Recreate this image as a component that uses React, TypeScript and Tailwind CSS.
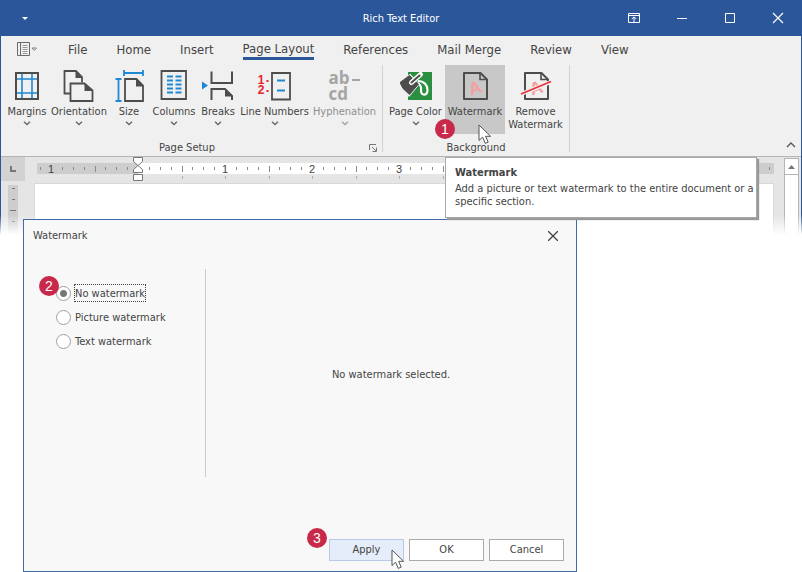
import { useState } from 'react'
import type { ReactNode } from 'react'

const tabs = ['File', 'Home', 'Insert', 'Page Layout', 'References', 'Mail Merge', 'Review', 'View']
const watermarkOptions = ['No watermark', 'Picture watermark', 'Text watermark']

// Ruler scale: one inch in pixels and the position of the left margin.
const INCH = 87
const ZERO = 101

const Badge = ({ value, className }: { value: number; className: string }) => (
  <span
    className={`absolute z-10 flex h-5 w-5 items-center justify-center rounded-full bg-[#c82849] font-['Liberation_Sans'] text-[14px] leading-5 text-white ${className}`}
  >
    {value}
  </span>
)

const Cursor = ({ className }: { className: string }) => (
  <svg className={`pointer-events-none absolute z-10 ${className}`} width="14" height="21" viewBox="0 0 14 21">
    <path d="M1 1v15.5l3.6-3.3 2.7 6.2 2.9-1.3-2.6-5.8h5z" fill="#fff" stroke="#555" strokeWidth="1" />
  </svg>
)

const Chevron = () => (
  <svg width="8" height="5" viewBox="0 0 8 5">
    <path d="M1 .8l3 2.8 3-2.8" fill="none" stroke="currentColor" strokeWidth="1.3" />
  </svg>
)

const MarginsIcon = () => (
  <svg width="32" height="32" viewBox="0 0 32 32" fill="none">
    <path d="M11 3v26M21 3v26M5 9h22M5 23h22" stroke="#1e88d2" strokeWidth="1.6" />
    <path d="M5 3h22v26H5z" stroke="#4d4d4b" strokeWidth="2" />
  </svg>
)

const OrientationIcon = () => (
  <svg width="32" height="32" viewBox="0 0 32 32" fill="none" stroke="#4d4d4b" strokeWidth="1.8">
    <path d="M7 23.5H1.5V1H13l6 6v5.5" />
    <path d="M12.5 1v7H19z" fill="#4d4d4b" stroke="none" />
    <path d="M7.5 13.5h14l8 7V31h-22z" />
    <path d="M21.5 13.5V21h8z" fill="#4d4d4b" stroke="none" />
  </svg>
)

const SizeIcon = () => (
  <svg width="32" height="32" viewBox="0 0 32 32" fill="none" strokeWidth="1.8">
    <path d="M11 3h19M11 0v6M30 0v6M5.5 9v22M2.5 9h6M2.5 31h6" stroke="#1e88d2" />
    <path d="M12 9h11.5l6.5 6.5V31H12z" stroke="#4d4d4b" />
    <path d="M23 9v7.5h7.5z" fill="#4d4d4b" />
  </svg>
)

const ColumnsIcon = () => (
  <svg width="32" height="32" viewBox="0 0 32 32" fill="none" strokeWidth="1.8">
    <path d="M3.5 1H28v28H3.5z" stroke="#4d4d4b" />
    <path
      d="M9 6.5h6M9 10.5h6M9 14.5h6M9 18.5h6M9 22.5h6M17.5 6.5h6M17.5 10.5h6M17.5 14.5h6M17.5 18.5h6M17.5 22.5h6"
      stroke="#1e88d2"
    />
  </svg>
)

const BreaksIcon = () => (
  <svg width="32" height="32" viewBox="0 0 32 32" fill="none" stroke="#4d4d4b" strokeWidth="2">
    <path d="M0 11.5l6 4-6 4z" fill="#1e88d2" stroke="none" />
    <path d="M9.5 1.5V13H30V1.5" />
    <path d="M9.5 30V19H23l7 7v4" />
    <path d="M23 19v7.5h7.5z" fill="#4d4d4b" stroke="none" />
  </svg>
)

const LineNumbersIcon = () => (
  <span className="flex h-8 w-[34px]">
    <span className="w-[7px] pt-[5px] font-['Liberation_Sans'] text-[12px] font-bold leading-[10px] text-[#e9222b]">
      <span className="block">1</span>
      <span className="block">2</span>
    </span>
    <svg width="27" height="32" viewBox="0 0 27 32" fill="none" strokeWidth="1.8">
      <path d="M1.5 11h2M1.5 21h2" stroke="#e9222b" />
      <path d="M7 3h18v26.5H7z" stroke="#4d4d4b" />
      <path d="M12 10.5h8M12 20.5h8" stroke="#1e88d2" />
    </svg>
  </span>
)

const HyphenationIcon = () => (
  <span className="block h-8 w-8 text-left font-['Open_Sans'] text-[17px] font-bold leading-4 text-[#a5a5a4]">
    <span className="flex items-center gap-[2px]">
      ab
      <span className="mt-1 h-[2px] w-2 shrink-0 bg-current" />
    </span>
    <span className="block">cd</span>
  </span>
)

const PageColorIcon = () => (
  <svg width="32" height="32" viewBox="0 0 32 32" fill="none">
    <path d="M8 2h24v28H8z" fill="#2b8f41" />
    <path d="M-.5 12.5L10 5l8.5 9L9 25.5 2 19z" fill="#efefef" stroke="#efefef" strokeWidth="2" />
    <path d="M18 11c6 0 9.5 4 9.5 9 0 6-6.5 6-6.5 1 0-3 1-6-3.5-8" stroke="#fff" strokeWidth="2.2" />
    <path
      d="M0 12.5L9.5 5.5 18.5 14l-9 10.5L3 18.5z"
      fill="#4d4d4b"
      stroke="#4d4d4b"
      strokeWidth="1"
      strokeLinejoin="round"
    />
    <path d="M11.5 12.5L20.5 4.5" stroke="#fff" strokeWidth="5" strokeLinecap="round" />
    <path d="M11.5 12.5L19.5 5.5" stroke="#4d4d4b" strokeWidth="2" strokeLinecap="round" />
  </svg>
)

const WatermarkPage = () => (
  <>
    <path d="M5 3h16.5L28 9.5V29H5z" stroke="#4d4d4b" strokeWidth="2" strokeLinejoin="round" />
    <path d="M21 3v6.5h7" stroke="#4d4d4b" strokeWidth="1.6" />
    <text
      x="16"
      y="24"
      textAnchor="middle"
      transform="rotate(-18 16 18)"
      fill="#f2a0a0"
      fontFamily="Liberation Sans"
      fontWeight="bold"
      fontSize="18"
    >
      A
    </text>
  </>
)

const WatermarkIcon = () => (
  <svg width="32" height="32" viewBox="0 0 32 32" fill="none">
    <WatermarkPage />
  </svg>
)

const RemoveWatermarkIcon = () => (
  <svg width="32" height="32" viewBox="0 0 32 32" fill="none">
    <WatermarkPage />
    <path d="M0 24.5L32 11.5" stroke="#efefef" strokeWidth="4" />
    <path d="M1 24L31 11.5" stroke="#ee3338" strokeWidth="1.8" />
  </svg>
)

interface RibbonButtonProps {
  icon: ReactNode
  label: string
  width: string
  menu?: boolean
  active?: boolean
  disabled?: boolean
}

const RibbonButton = ({ icon, label, width, menu = true, active, disabled }: RibbonButtonProps) => (
  <button
    type="button"
    disabled={disabled}
    className={`flex h-[69px] shrink-0 flex-col items-center pt-[5px] leading-[13px] ${width} ${
      active ? 'bg-[#c8c8c8]' : ''
    } ${disabled ? 'text-[#8f8f8f]' : ''}`}
  >
    {icon}
    <span className="mt-[3px]">{label}</span>
    {menu && (
      <span className="mt-[3px] flex opacity-80">
        <Chevron />
      </span>
    )}
  </button>
)

const TitleBar = () => (
  <header className="grid h-9 grid-cols-3 items-center bg-[#2b579a] text-white">
    <button type="button" aria-label="Customize quick access" className="ml-[22px] w-2">
      <svg width="6" height="3" viewBox="0 0 6 3">
        <path d="M0 0h6L3 3z" fill="#fff" />
      </svg>
    </button>
    <h1 className="pt-[2px] text-center">Rich Text Editor</h1>
    <div className="mr-[18px] flex justify-end gap-9">
      <button type="button" aria-label="Ribbon display options">
        <svg width="12" height="12" viewBox="0 0 12 12" fill="none" stroke="#fff">
          <path d="M.5 1.5h11v9H.5zM.5 3.5h11M6 10V5M3.8 7L6 4.8 8.200 7" />
        </svg>
      </button>
      <button type="button" aria-label="Minimize">
        <svg width="12" height="12" viewBox="0 0 12 12" stroke="#fff">
          <path d="M1 6.5h10" />
        </svg>
      </button>
      <button type="button" aria-label="Maximize">
        <svg width="12" height="12" viewBox="0 0 12 12" fill="none" stroke="#fff">
          <path d="M1.5 1.5h9v9h-9z" />
        </svg>
      </button>
      <button type="button" aria-label="Close">
        <svg width="12" height="12" viewBox="0 0 12 12" stroke="#fff" strokeWidth="1.2">
          <path d="M1 1l10 10M11 1L1 11" />
        </svg>
      </button>
    </div>
  </header>
)

const TabStrip = () => (
  <nav className="flex h-[29px] items-start pl-4 pt-1 text-[13px] leading-[18px]">
    <button type="button" aria-label="Application menu" className="mr-[31px] mt-[2px]">
      <svg width="20" height="14" viewBox="0 0 20 14" fill="none" stroke="#6a6a6a">
        <path d="M.5.5h12v13H.5zM3.5.5v13" />
        <path d="M5.5 3.5h5M5.5 5.5h5M5.5 7.5h5M5.5 9.5h5M5.5 11.5h5" stroke="#9a9a9a" />
        <path d="M15 6h4.5L17.25 8.5z" strokeWidth=".8" />
      </svg>
    </button>
    <div className="flex gap-[29px]">
      {tabs.map((tab) => (
        <button
          key={tab}
          type="button"
          className={`h-[20px] whitespace-nowrap ${tab === 'Page Layout' ? 'border-b-3 border-[#2b579a]' : ''}`}
        >
          {tab}
        </button>
      ))}
    </div>
  </nav>
)

const Tooltip = () => (
  <div
    role="tooltip"
    className="absolute left-0 top-[92px] z-10 h-[61px] w-[312px] border border-[#a8a8a8] bg-white pl-[9px] pt-2 leading-[13px] shadow-[2px_2px_1px_#999]"
  >
    <p className="mb-[2px] font-bold leading-[14px]">Watermark</p>
    <p>Add a picture or text watermark to the entire document or a specific section.</p>
  </div>
)

const Ribbon = () => (
  <section className="flex h-[92px] border-b border-[#b5b5b5]">
    <div className="flex flex-col">
      <div className="flex pl-1">
        <RibbonButton icon={<MarginsIcon />} label="Margins" width="w-[44px]" />
        <RibbonButton icon={<OrientationIcon />} label="Orientation" width="w-[60px]" />
        <RibbonButton icon={<SizeIcon />} label="Size" width="w-[40px]" />
        <RibbonButton icon={<ColumnsIcon />} label="Columns" width="w-[50px]" />
        <RibbonButton icon={<BreaksIcon />} label="Breaks" width="w-[38px]" />
        <RibbonButton icon={<LineNumbersIcon />} label="Line Numbers" width="w-[75px]" />
        <RibbonButton icon={<HyphenationIcon />} label="Hyphenation" width="w-[65px]" disabled />
      </div>
      <div className="grid grid-cols-[1fr_auto] items-center pl-1 pt-[6px]">
        <span className="text-center">Page Setup</span>
        <button type="button" aria-label="Page setup options">
          <svg width="8" height="8" viewBox="0 0 8 8" fill="none" stroke="#777">
            <path d="M.5 6V.5H7M3 3l4 4M7.5 3.5v4h-4" />
          </svg>
        </button>
      </div>
    </div>
    <div className="mb-1 ml-[5px] flex flex-col border-x border-[#d4d4d4] px-[3px]">
      <div className="flex">
        <RibbonButton icon={<PageColorIcon />} label="Page Color" width="w-[59px]" />
        <div className="relative">
          <RibbonButton icon={<WatermarkIcon />} label="Watermark" width="w-[60px]" menu={false} active />
          <Badge value={1} className="-left-[10px] top-[54px]" />
          <Cursor className="left-[33px] top-[59px]" />
          <Tooltip />
        </div>
        <RibbonButton icon={<RemoveWatermarkIcon />} label="Remove Watermark" width="w-[61px]" menu={false} />
      </div>
      <span className="pt-[6px] text-center">Background</span>
    </div>
    <button type="button" aria-label="Collapse ribbon" className="mb-2 ml-auto mr-[5px] self-end">
      <svg width="10" height="6" viewBox="0 0 10 6" fill="none" stroke="#555" strokeWidth="1.3">
        <path d="M1 5l4-4 4 4" />
      </svg>
    </button>
  </section>
)

const Ruler = () => {
  const ticks = Array.from({ length: 68 }, (_, i) => i - 9)
  return (
    <svg className="w-full" height="26" aria-hidden="true">
      <rect x="0" y="6" width="100%" height="11" fill="#cdcdcd" />
      <rect x={ZERO} y="6" width="566" height="11" fill="#fff" />
      {ticks.map((i) => {
        const x = ZERO + (i * INCH) / 8
        if (i === 0) return null
        if (i % 8 === 0) {
          // numbers past three inches lie under the tooltip
          if (i > 24) return null
          return (
            <text key={i} x={x} y="16" textAnchor="middle" fontSize="11" fontFamily="Liberation Sans" fill="#444">
              {Math.abs(i / 8)}
            </text>
          )
        }
        const tall = i % 4 === 0
        return <rect key={i} x={Math.round(x)} y={tall ? 9 : 10} width="1" height={tall ? 6 : 3} fill="#8a8a8a" />
      })}
      {ticks
        .filter((i) => i > 0 && i % 4 === 0)
        .map((i) => (
          <rect key={i} x={Math.round(ZERO + (i * INCH) / 8)} y="19" width="1" height="3" fill="#b0b0b0" />
        ))}
      <g fill="#fff" stroke="#777">
        <path d="M96.5.5h9v4l-4.5 4-4.5-4z" />
        <path d="M101 8.5l4.5 4v3h-9v-3zM96.5 17.5h9v6h-9z" />
      </g>
    </svg>
  )
}

const DocumentArea = () => (
  <section className="flex h-[78px] bg-[#e5e5e5]">
    <div className="w-9 shrink-0">
      <div className="flex h-[24px] w-6 items-center justify-center bg-[#d2d2d2]">
        <svg width="6" height="6" viewBox="0 0 6 6" fill="none" stroke="#777" strokeWidth="2">
          <path d="M1 0v5h5" />
        </svg>
      </div>
      <svg className="ml-[7px] mt-1" width="10" height="50">
        <rect width="10" height="50" fill="#cdcdcd" />
        <path d="M4 3.5h3M4 14.5h3M2 25.5h6M4 36.5h3" stroke="#777" />
      </svg>
    </div>
    <div className="flex grow flex-col">
      <Ruler />
      <div className="-ml-[3px] grow border border-b-0 border-[#d8d8d8] bg-white" />
    </div>
    <div className="ml-[10px] mr-[2px] mt-px w-[15px] shrink-0 border border-[#b5b5b5] bg-white">
      <button
        type="button"
        aria-label="Scroll up"
        className="flex h-4 w-full items-center justify-center border-b border-[#b5b5b5]"
      >
        <svg width="7" height="4" viewBox="0 0 7 4">
          <path d="M3.5 0L7 4H0z" fill="#777" />
        </svg>
      </button>
    </div>
  </section>
)

const WatermarkDialog = () => {
  const [selected, setSelected] = useState(watermarkOptions[0])

  return (
    <div
      role="dialog"
      aria-label="Watermark"
      className="absolute bottom-0 left-[23px] top-[219px] flex w-[554px] flex-col border border-[#4069a8] bg-[#f8f8f8]"
    >
      <div className="flex h-8 items-center justify-between pl-[9px] pr-[18px]">
        <h2>Watermark</h2>
        <button type="button" aria-label="Close dialog">
          <svg width="10" height="10" viewBox="0 0 10 10" stroke="#444" strokeWidth="1.3">
            <path d="M0 0l10 10M10 0L0 10" />
          </svg>
        </button>
      </div>
      <div className="mt-[17px] flex h-[208px]">
        <div className="relative flex w-[182px] shrink-0 flex-col gap-2 border-r border-[#cbcbcb] pl-8 pt-4">
          <Badge value={2} className="left-[15px] top-[7px]" />
          {watermarkOptions.map((option) => (
            <label key={option} className="flex h-4 items-center gap-[3px]">
              <input
                type="radio"
                name="watermark"
                checked={selected === option}
                onChange={() => setSelected(option)}
                className="h-[15px] w-[15px] appearance-none rounded-full border border-[#a0a0a0] bg-white checked:bg-[radial-gradient(circle,#777_3px,#fff_4px)]"
              />
              <span
                className={`border border-dotted pt-[2px] leading-[14px] ${
                  selected === option ? 'border-[#444]' : 'border-transparent'
                }`}
              >
                {option}
              </span>
            </label>
          ))}
        </div>
        <p className="flex grow items-center justify-center pt-1">No watermark selected.</p>
      </div>
      <div className="mb-[10px] mt-auto flex justify-end gap-[5px] pr-3">
        <div className="relative">
          <Badge value={3} className="-left-[22px] -top-[11px]" />
          <button type="button" className="h-[22px] w-[75px] border border-[#b8cae6] bg-[#e4edf9]">
            Apply
          </button>
          <Cursor className="left-[62px] top-[10px]" />
        </div>
        <button type="button" className="h-[22px] w-[75px] border border-[#ababab] bg-white">
          OK
        </button>
        <button type="button" className="h-[22px] w-[75px] border border-[#ababab] bg-white">
          Cancel
        </button>
      </div>
    </div>
  )
}

const App = () => (
  <div className="relative min-h-screen overflow-hidden bg-white font-['DejaVu_Sans_Condensed',sans-serif] text-[11px] text-[#444]">
    <div className="relative">
      <TitleBar />
      <div className="border-x border-[#2b579a] bg-[#f0f0f0]">
        <TabStrip />
        <Ribbon />
        <DocumentArea />
      </div>
      <div className="absolute inset-x-0 bottom-0 h-5 bg-linear-to-b from-transparent to-white" />
    </div>
    <WatermarkDialog />
  </div>
)

export default App
